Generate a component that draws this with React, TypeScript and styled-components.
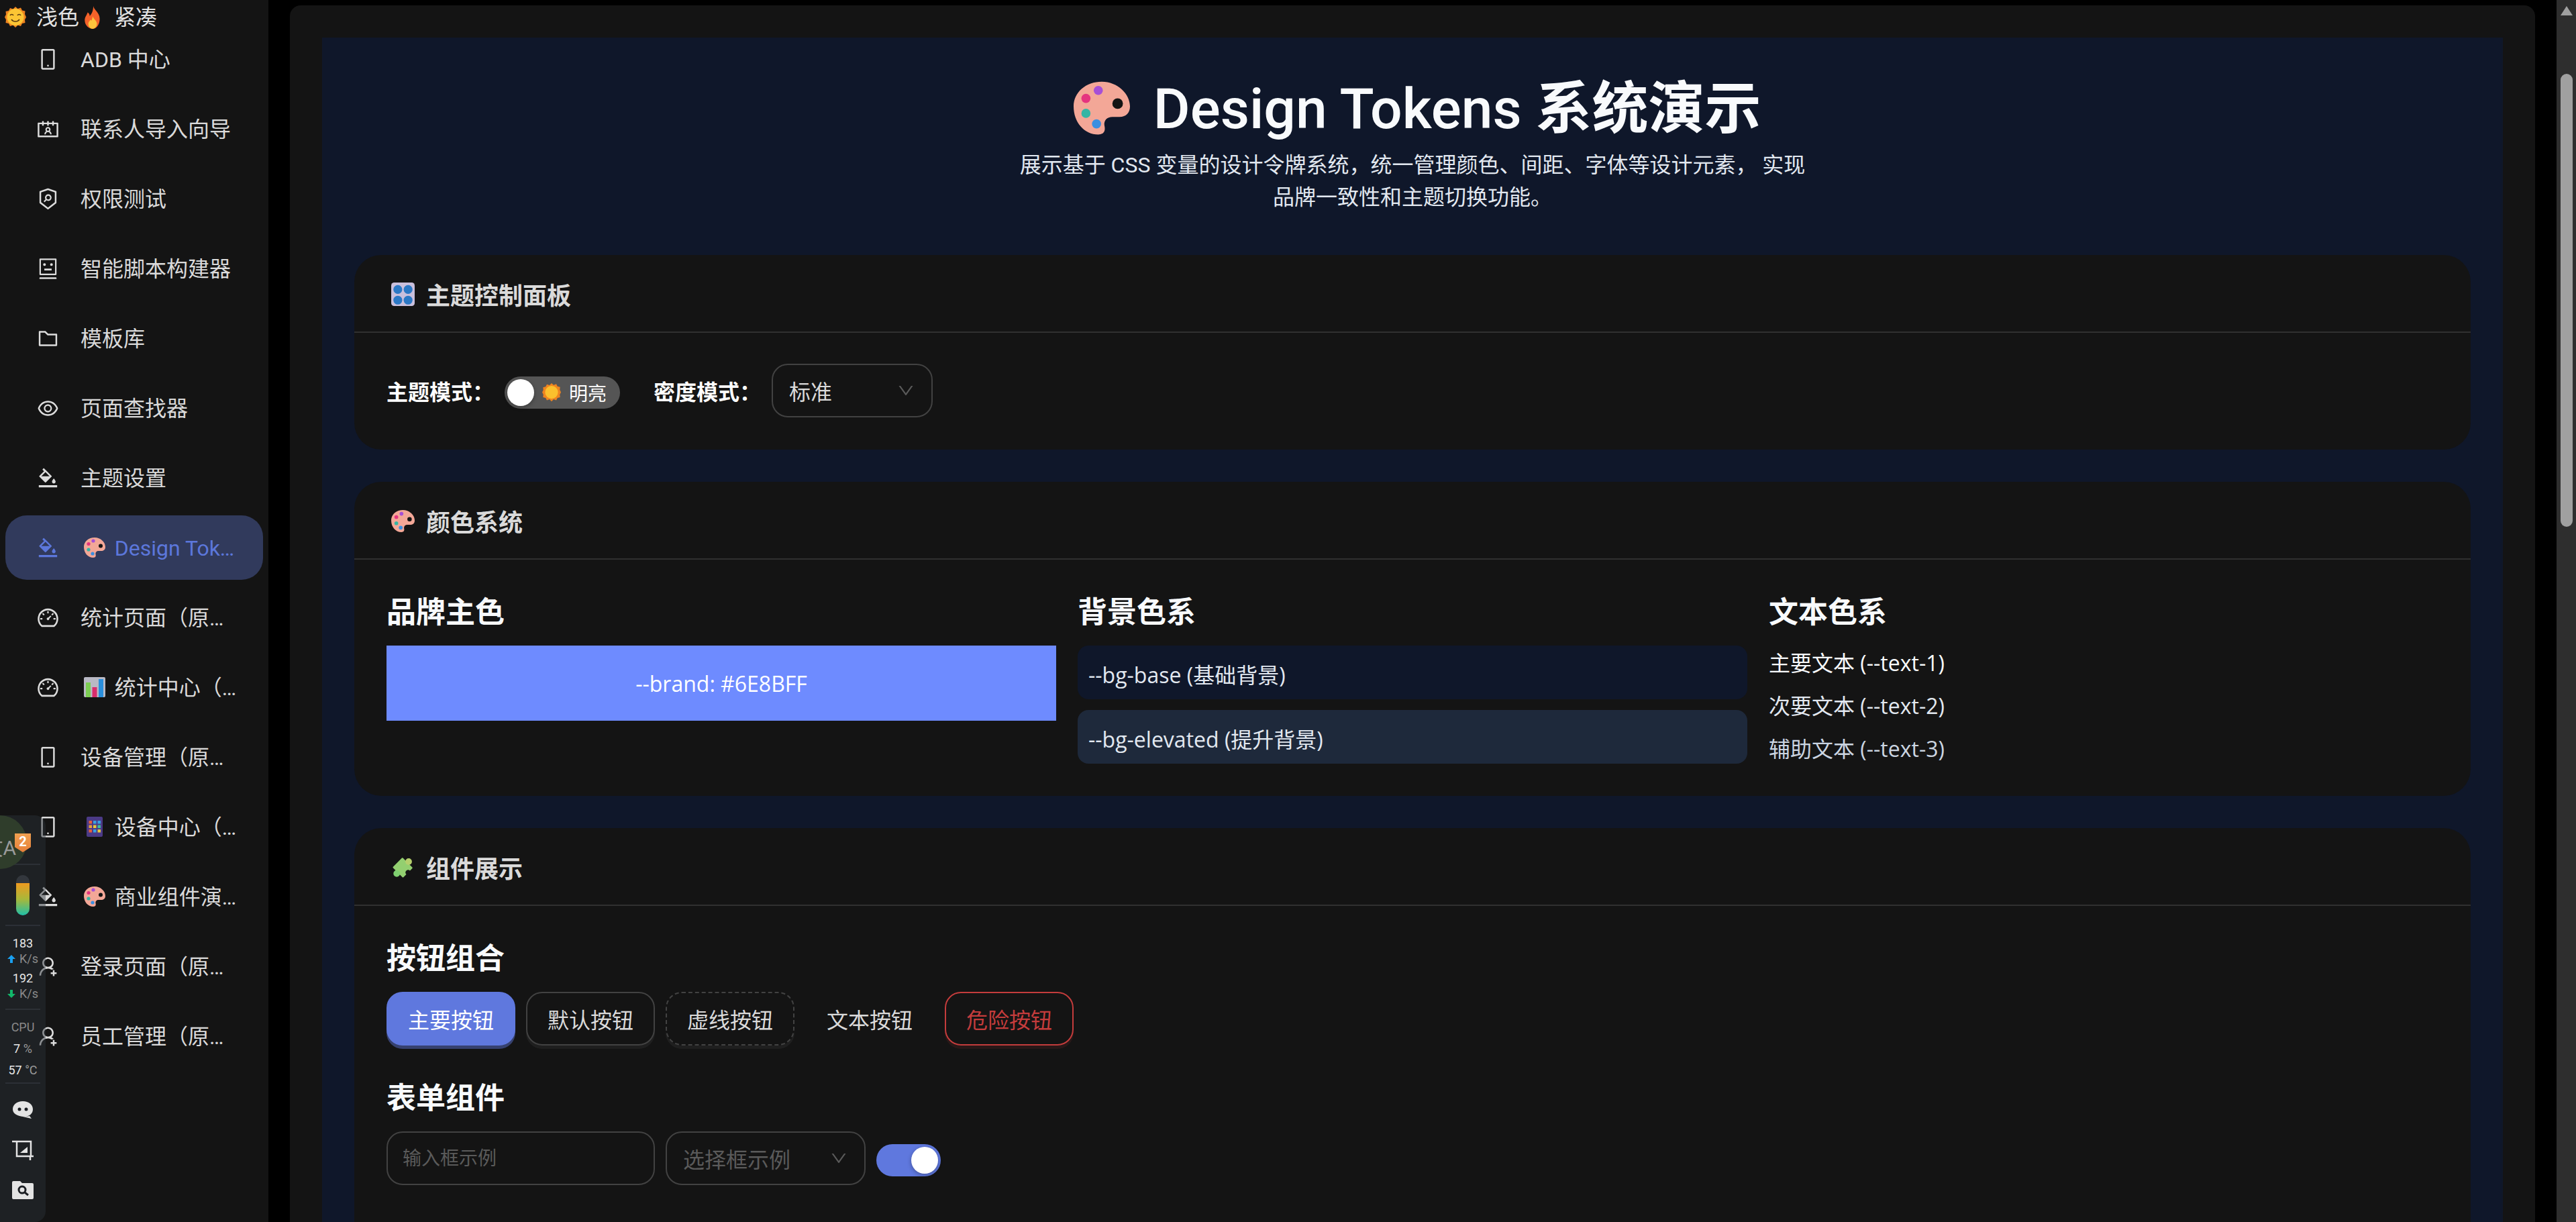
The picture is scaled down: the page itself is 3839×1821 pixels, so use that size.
import { FC, ReactNode } from 'react';
import styled, { createGlobalStyle } from 'styled-components';
import {
  AiOutlineBgColors,
  AiOutlineContacts,
  AiOutlineDashboard,
  AiOutlineDown,
  AiOutlineEye,
  AiOutlineFolder,
  AiOutlineMobile,
  AiOutlineRobot,
  AiOutlineSecurityScan,
  AiOutlineUserAdd,
} from 'react-icons/ai';

const FONT = `Roboto, "Noto Sans CJK SC", sans-serif`;
const TOKEN_FONT = `"Open Sans", "Noto Sans CJK SC", sans-serif`;

const GlobalStyle = createGlobalStyle`
  html, body {
    margin: 0;
    height: 100%;
    background: #000;
    overflow: hidden;
  }
  * {
    box-sizing: border-box;
    font-variant-ligatures: none;
  }
`;

type EmojiName = 'smile' | 'sun' | 'fire' | 'palette' | 'chart' | 'abacus' | 'knobs' | 'puzzle';

const SUN_RAYS =
  'M16 0l3.500 3 4.500-1.500 2 4 4.500 1-.5 4.500L32 15.500l-2 4 .5 4.500-4.500 1-2 4-4.500-1.500L16 31l-3.500-3.500L8 29l-2-4-4.500-1 .5-4.500-2-4 2-4L1.500 7 6 6l2-4 4.500 1.500z';

const Emoji: FC<{ name: EmojiName; size: number; inline?: boolean }> = ({ name, size, inline }) => {
  const art: Record<EmojiName, ReactNode> = {
    smile: (
      <>
        <path d={SUN_RAYS} fill="#ee8420" />
        <circle cx="16" cy="15.500" r="12.500" fill="#fbc534" />
        <path d="M8 13c1-2 4-2 5 0M19 13c1-2 4-2 5 0M10 19c3 4 9 4 12 0" fill="none" stroke="#5a3a10" strokeWidth="1.600" />
      </>
    ),
    sun: (
      <>
        <path d={SUN_RAYS} fill="#ee8420" />
        <circle cx="16" cy="15.500" r="11" fill="#fbc02d" />
      </>
    ),
    fire: (
      <>
        <path d="M17 0c1 6 9 9 9 18 0 8-5 14-10 14S5 27 5 20c0-5 3-7 4-11 2 1 3 3 3 5 3-3 5-8 5-14z" fill="#f4622a" />
        <path d="M16 14c1 4 6 6 6 11 0 4-3 7-6 7s-6-3-6-7c0-3 2-4 3-6 1 1 1 1 1 2 1-2 2-4 2-7z" fill="#fdc43c" />
      </>
    ),
    palette: (
      <>
        <path
          d="M16 1C7 1 0 7 0 15c0 9 6 16 14 16 4 0 4-3 3.500-5-.5-3 1.500-5 4.500-5h4c4 0 6-2.500 6-6 0-7-7-14-16-14z"
          fill="#f3a797"
        />
        <circle cx="25" cy="13.500" r="3" fill="#141414" />
        <circle cx="14" cy="6" r="2.600" fill="#a64fd6" />
        <circle cx="7" cy="10.500" r="2.600" fill="#e5347f" />
        <circle cx="7" cy="19" r="2.600" fill="#35b5a4" />
        <circle cx="13" cy="25" r="2.600" fill="#3a8fe0" />
      </>
    ),
    chart: (
      <>
        <rect x="0" y="1" width="32" height="30" rx="2" fill="#b9b9c4" />
        <rect x="3" y="9" width="7" height="22" fill="#7ccd52" />
        <rect x="12.500" y="16" width="7" height="15" fill="#d92c6c" />
        <rect x="22" y="4" width="7" height="27" fill="#2a8fdc" />
      </>
    ),
    abacus: (
      <>
        <rect x="4" y="1" width="24" height="30" rx="2" fill="#4b3a86" />
        {[7, 13.500, 20].map((y, r) =>
          [7.500, 14, 20.500].map((x, c) => (
            <rect
              key={`${r}-${c}`}
              x={x}
              y={y}
              width="4.500"
              height="4.500"
              fill={[['#e5603c', '#3aa0e0', '#3aa0e0'], ['#e5a03c', '#e5c83c', '#3ac0a0'], ['#e5603c', '#3aa0e0', '#e5c83c']][r][c]}
            />
          )),
        )}
      </>
    ),
    knobs: (
      <>
        <rect x="0" y="0" width="32" height="32" rx="4" fill="#c9bfdc" />
        {[9, 23].map((x) =>
          [9.500, 24].map((y) => <circle key={`${x}-${y}`} cx={x} cy={y} r="6" fill="#2b78c5" />),
        )}
      </>
    ),
    puzzle: (
      <g transform="rotate(45 16 16)">
        <rect x="6" y="7" width="20" height="19" rx="1" fill="#93cf70" />
        <circle cx="16" cy="5" r="4.500" fill="#b5cf6c" />
        <circle cx="16" cy="28" r="4.500" fill="#7fd070" />
        <circle cx="26" cy="16" r="3.500" fill="#141414" />
      </g>
    ),
  };
  return (
    <EmojiSvg viewBox="0 0 32 32" width={size} height={size} $inline={inline}>
      {art[name]}
    </EmojiSvg>
  );
};

const NAV: { icon: ReactNode; emoji?: EmojiName; label: string; active?: boolean }[] = [
  { icon: <AiOutlineMobile />, label: 'ADB 中心' },
  { icon: <AiOutlineContacts />, label: '联系人导入向导' },
  { icon: <AiOutlineSecurityScan />, label: '权限测试' },
  { icon: <AiOutlineRobot />, label: '智能脚本构建器' },
  { icon: <AiOutlineFolder />, label: '模板库' },
  { icon: <AiOutlineEye />, label: '页面查找器' },
  { icon: <AiOutlineBgColors />, label: '主题设置' },
  { icon: <AiOutlineBgColors />, emoji: 'palette', label: 'Design Tokens', active: true },
  { icon: <AiOutlineDashboard />, label: '统计页面（原版）' },
  { icon: <AiOutlineDashboard />, emoji: 'chart', label: '统计中心（新版）' },
  { icon: <AiOutlineMobile />, label: '设备管理（原版）' },
  { icon: <AiOutlineMobile />, emoji: 'abacus', label: '设备中心（新版）' },
  { icon: <AiOutlineBgColors />, emoji: 'palette', label: '商业组件演示页面' },
  { icon: <AiOutlineUserAdd />, label: '登录页面（原版）' },
  { icon: <AiOutlineUserAdd />, label: '员工管理（原版）' },
];

const SysWidget = () => (
  <Widget>
    <WidgetSection $height={74}>
      <TranslateBubble>文A</TranslateBubble>
      <ShieldBadge>2</ShieldBadge>
    </WidgetSection>
    <WidgetSection $height={91}>
      <Gauge>
        <GaugeFill />
      </Gauge>
    </WidgetSection>
    <WidgetSection $height={125}>
      <Metric>183</Metric>
      <Rate>
        <Arrow viewBox="0 0 12 12">
          <path d="M6 0l6 6H8v6H4V6H0z" fill="#1aa0f0" />
        </Arrow>
        K/s
      </Rate>
      <Metric>192</Metric>
      <Rate>
        <Arrow viewBox="0 0 12 12">
          <path d="M6 12L0 6h4V0h4v6h4z" fill="#12b76a" />
        </Arrow>
        K/s
      </Rate>
    </WidgetSection>
    <WidgetSection $height={110}>
      <CpuLabel>CPU</CpuLabel>
      <Metric>
        7 <Unit>%</Unit>
      </Metric>
      <Metric>
        57 <Unit>°C</Unit>
      </Metric>
    </WidgetSection>
    <WidgetTools>
      <svg viewBox="0 0 32 26" width="32" height="26">
        <path d="M16 0c9 0 15 5 15 12s-6 11-13 11c-1 0-2 0-3-.2L29 26l-3-4C12 25 1 20 1 12 1 5 7 0 16 0z" fill="#e4e4e4" />
        <circle cx="11" cy="12" r="2.500" fill="#1c1f24" />
        <circle cx="21" cy="12" r="2.500" fill="#1c1f24" />
      </svg>
      <svg viewBox="0 0 32 32" width="34" height="32" fill="none" stroke="#e4e4e4" strokeWidth="2.500">
        <path d="M0 4h7v22h25M7 4h21v22M27 26v6" />
        <path d="M12 21l11-9v9z" fill="#e4e4e4" stroke="none" />
      </svg>
      <svg viewBox="0 0 32 28" width="32" height="28">
        <path d="M0 3a2 2 0 012-2h10l3 3h15a2 2 0 012 2v20a2 2 0 01-2 2H2a2 2 0 01-2-2z" fill="#e4e4e4" />
        <circle cx="15" cy="14" r="5" fill="none" stroke="#1c1f24" strokeWidth="3" />
        <path d="M19 18l5 4" stroke="#1c1f24" strokeWidth="3" />
      </svg>
    </WidgetTools>
  </Widget>
);

export default function App() {
  return (
    <Shell>
      <GlobalStyle />
      <Sidebar>
        <StatusRow>
          <Emoji name="smile" size={32} />
          <StatusText $tight>浅色</StatusText>
          <Emoji name="fire" size={34} />
          <StatusText>紧凑</StatusText>
        </StatusRow>
        {NAV.map((item) => (
          <NavItem key={item.label} $active={item.active}>
            <NavIcon>{item.icon}</NavIcon>
            <NavLabel>
              {item.emoji && <Emoji name={item.emoji} size={32} inline />}
              {item.emoji && ' '}
              {item.label}
            </NavLabel>
          </NavItem>
        ))}
      </Sidebar>
      <Main>
        <Panel>
          <BluePage>
            <Header>
              <PageTitle>
                <Emoji name="palette" size={84} inline /> <TitleLatin>Design Tokens</TitleLatin> 系统演示
              </PageTitle>
              <Subtitle>
                展示基于 CSS 变量的设计令牌系统，统一管理颜色、间距、字体等设计元素， 实现品牌一致性和主题切换功能。
              </Subtitle>
            </Header>

            <Card>
              <CardHead>
                <Emoji name="knobs" size={35} /> 主题控制面板
              </CardHead>
              <ControlRow>
                <ControlLabel>主题模式：</ControlLabel>
                <ThemeSwitch>
                  <ThemeKnob />
                  <Emoji name="sun" size={28} />
                  明亮
                </ThemeSwitch>
                <ControlLabel $first>密度模式：</ControlLabel>
                <SelectBox $width={240}>
                  标准
                  <AiOutlineDown />
                </SelectBox>
              </ControlRow>
            </Card>

            <Card>
              <CardHead>
                <Emoji name="palette" size={35} /> 颜色系统
              </CardHead>
              <ColorGrid>
                <div>
                  <SubHeading>品牌主色</SubHeading>
                  <BrandSwatch>--brand: #6E8BFF</BrandSwatch>
                </div>
                <div>
                  <SubHeading>背景色系</SubHeading>
                  <SwatchStack>
                    <BgSwatch $bg="#0f172a">--bg-base (基础背景)</BgSwatch>
                    <BgSwatch $bg="#1e293b">--bg-elevated (提升背景)</BgSwatch>
                  </SwatchStack>
                </div>
                <div>
                  <SubHeading>文本色系</SubHeading>
                  <TextStack>
                    <TextSample $color="#f8fafc">主要文本 (--text-1)</TextSample>
                    <TextSample $color="#e2e8f0">次要文本 (--text-2)</TextSample>
                    <TextSample $color="#cbd5e1">辅助文本 (--text-3)</TextSample>
                  </TextStack>
                </div>
              </ColorGrid>
            </Card>

            <Card>
              <CardHead>
                <Emoji name="puzzle" size={35} /> 组件展示
              </CardHead>
              <ShowcaseBody>
                <SubHeading>按钮组合</SubHeading>
                <Row>
                  <Button $kind="primary">主要按钮</Button>
                  <Button $kind="default">默认按钮</Button>
                  <Button $kind="dashed">虚线按钮</Button>
                  <Button $kind="text">文本按钮</Button>
                  <Button $kind="danger">危险按钮</Button>
                </Row>
                <FormHeading>表单组件</FormHeading>
                <Row>
                  <InputBox placeholder="输入框示例" />
                  <SelectBox $width={298} $muted>
                    选择框示例
                    <AiOutlineDown />
                  </SelectBox>
                  <OnSwitch>
                    <OnKnob />
                  </OnSwitch>
                </Row>
              </ShowcaseBody>
            </Card>
          </BluePage>
        </Panel>
      </Main>
      <Scrollbar>
        <ScrollArrow />
        <ScrollThumb />
      </Scrollbar>
      <SysWidget />
    </Shell>
  );
}

const EmojiSvg = styled.svg<{ $inline?: boolean }>`
  display: inline-block;
  vertical-align: -0.14em;
  flex-shrink: 0;
  margin: ${(p) => (p.$inline ? '0 0.17em' : '0')};
`;

const Shell = styled.div`
  position: relative;
  display: flex;
  height: 1821px;
  overflow: hidden;
  background: #000;
  font-family: ${FONT};
  color: #fff;
`;

const Sidebar = styled.aside`
  position: relative;
  flex: 0 0 400px;
  display: flex;
  flex-direction: column;
  gap: 8px;
  padding: 40px 8px 0;
  background: #141414;
`;

const StatusRow = styled.div`
  position: absolute;
  top: 8px;
  left: 7px;
  display: flex;
  align-items: center;
  gap: 15px;
  height: 36px;
`;

const StatusText = styled.span<{ $tight?: boolean }>`
  font-size: 32px;
  line-height: 36px;
  margin-right: ${(p) => (p.$tight ? '-12px' : '0')};
  color: rgba(255, 255, 255, 0.9);
`;

const NavItem = styled.div<{ $active?: boolean }>`
  flex: 0 0 96px;
  display: flex;
  align-items: center;
  gap: 31px;
  padding-left: 46px;
  border-radius: 32px;
  font-size: 32px;
  color: ${(p) => (p.$active ? '#5c77db' : 'rgba(255, 255, 255, 0.85)')};
  background: ${(p) => (p.$active ? '#313a5c' : 'transparent')};
`;

const NavIcon = styled.span`
  display: flex;
  font-size: 35px;
`;

const NavLabel = styled.span`
  width: 240px;
  padding-top: 2px;
  overflow: hidden;
  white-space: nowrap;
  text-overflow: ellipsis;
  line-height: 48px;
`;

const Main = styled.main`
  flex: 1;
  min-width: 0;
  padding: 8px 32px 0;
`;

const Panel = styled.div`
  height: 100%;
  padding: 48px 48px 0;
  background: #141414;
  border-radius: 16px 16px 0 0;
`;

const BluePage = styled.div`
  height: 100%;
  padding: 48px 48px 0;
  background: #0f172a;
`;

const Header = styled.header`
  display: flex;
  flex-direction: column;
  align-items: center;
  margin-bottom: 62px;
  text-align: center;
`;

const PageTitle = styled.h1`
  margin: 0;
  font-size: 84px;
  font-weight: 700;
  line-height: 118px;
  color: #f8fafc;
`;

const TitleLatin = styled.span`
  font-weight: 500;
`;

const Subtitle = styled.p`
  margin: 0;
  max-width: 1200px;
  font-size: 32px;
  line-height: 48px;
  color: #e2e8f0;
`;

const Card = styled.section`
  margin-bottom: 48px;
  background: #141414;
  border-radius: 40px;
`;

const CardHead = styled.div`
  display: flex;
  align-items: center;
  gap: 17px;
  height: 116px;
  padding: 2px 48px 0 55px;
  border-bottom: 2px solid #303030;
  font-size: 36px;
  font-weight: 600;
  color: rgba(255, 255, 255, 0.85);
`;

const ControlRow = styled.div`
  display: flex;
  align-items: center;
  padding: 46px 48px 48px;
`;

const ControlLabel = styled.span<{ $first?: boolean }>`
  margin: ${(p) => (p.$first ? '0 16px 0 50px' : '0 16px 0 0')};
  font-size: 32px;
  font-weight: 600;
  white-space: nowrap;
`;

const ThemeSwitch = styled.div`
  position: relative;
  display: flex;
  align-items: center;
  gap: 12px;
  width: 172px;
  height: 48px;
  margin-top: 6px;
  padding-left: 56px;
  border-radius: 24px;
  background: #555;
  font-size: 28px;
`;

const ThemeKnob = styled.span`
  position: absolute;
  left: 4px;
  top: 4px;
  width: 40px;
  height: 40px;
  border-radius: 50%;
  background: #fff;
  box-shadow: 0 2px 6px rgba(0, 0, 0, 0.3);
`;

const SelectBox = styled.div<{ $width: number; $muted?: boolean }>`
  display: flex;
  align-items: center;
  justify-content: space-between;
  width: ${(p) => p.$width}px;
  height: 80px;
  padding: 0 24px;
  border: 2px solid #424242;
  border-radius: 24px;
  font-size: 32px;
  color: ${(p) => (p.$muted ? '#5a5a5a' : 'rgba(255, 255, 255, 0.85)')};

  > svg {
    font-size: 28px;
    color: #5a5a5a;
  }
`;

const ColorGrid = styled.div`
  display: grid;
  grid-template-columns: repeat(3, 1fr);
  gap: 32px;
  padding: 48px;
`;

const SubHeading = styled.h4`
  margin: 0 0 18px;
  font-size: 44px;
  font-weight: 700;
  line-height: 62px;
  color: #f8fafc;
`;

const FormHeading = styled(SubHeading)`
  margin-top: 48px;
`;

const BrandSwatch = styled.div`
  display: flex;
  align-items: center;
  justify-content: center;
  height: 112px;
  background: #6e8bff;
  font-family: ${TOKEN_FONT};
  font-size: 32px;
  font-weight: 500;
`;

const SwatchStack = styled.div`
  display: flex;
  flex-direction: column;
  gap: 16px;
`;

const BgSwatch = styled.div<{ $bg: string }>`
  display: flex;
  align-items: center;
  height: 80px;
  padding: 4px 16px 0;
  border-radius: 16px;
  background: ${(p) => p.$bg};
  font-family: ${TOKEN_FONT};
  font-size: 32px;
  color: #e2e8f0;
`;

const TextStack = styled.div`
  display: flex;
  flex-direction: column;
  gap: 16px;
  padding-top: 2px;
  margin-bottom: -2px;
`;

const TextSample = styled.div<{ $color: string }>`
  font-family: ${TOKEN_FONT};
  font-size: 32px;
  line-height: 48px;
  color: ${(p) => p.$color};
`;

const ShowcaseBody = styled.div`
  padding: 48px 48px 120px;
`;

const Row = styled.div`
  display: flex;
  align-items: center;
  gap: 16px;
`;

const BUTTON_STYLES = {
  primary: 'background:#5f78de;border:2px solid #5f78de;color:#fff;box-shadow:0 5px 0 rgba(95,120,222,.45);',
  default: 'background:transparent;border:2px solid #424242;color:rgba(255,255,255,.85);box-shadow:0 5px 0 rgba(255,255,255,.05);',
  dashed: 'background:transparent;border:2px dashed #424242;color:rgba(255,255,255,.85);box-shadow:0 5px 0 rgba(255,255,255,.05);',
  text: 'background:transparent;border:2px solid transparent;color:rgba(255,255,255,.85);',
  danger: 'background:transparent;border:2px solid #c43c3c;color:#c43c3c;box-shadow:0 5px 0 rgba(196,60,60,.12);',
};

const Button = styled.button<{ $kind: keyof typeof BUTTON_STYLES }>`
  width: 192px;
  height: 80px;
  padding: 0;
  border-radius: 24px;
  font-family: inherit;
  font-size: 32px;
  ${(p) => BUTTON_STYLES[p.$kind]}
`;

const InputBox = styled.input`
  width: 400px;
  height: 80px;
  padding: 0 22px;
  border: 2px solid #424242;
  border-radius: 24px;
  outline: none;
  background: transparent;
  font-family: inherit;
  font-size: 28px;

  &::placeholder {
    color: #5a5a5a;
  }
`;

const OnSwitch = styled.div`
  position: relative;
  width: 96px;
  height: 48px;
  margin-top: 6px;
  border-radius: 24px;
  background: #5f78de;
`;

const OnKnob = styled.span`
  position: absolute;
  right: 4px;
  top: 4px;
  width: 40px;
  height: 40px;
  border-radius: 50%;
  background: #fff;
  box-shadow: 0 2px 6px rgba(0, 0, 0, 0.3);
`;

const Scrollbar = styled.div`
  position: relative;
  flex: 0 0 29px;
  background: #2e2e2e;
`;

const ScrollArrow = styled.div`
  position: absolute;
  top: 9px;
  left: 6px;
  width: 0;
  height: 0;
  border-left: 9px solid transparent;
  border-right: 9px solid transparent;
  border-bottom: 14px solid #a0a0a0;
`;

const ScrollThumb = styled.div`
  position: absolute;
  top: 110px;
  left: 6px;
  width: 18px;
  height: 675px;
  border-radius: 9px;
  background: #a0a0a0;
`;

const Widget = styled.div`
  position: absolute;
  left: 0;
  top: 1215px;
  bottom: 0;
  width: 68px;
  display: flex;
  flex-direction: column;
  overflow: hidden;
  background: rgba(42, 48, 56, 0.45);
  border-radius: 0 16px 16px 0;
`;

const WidgetSection = styled.div<{ $height: number }>`
  position: relative;
  flex: 0 0 ${(p) => p.$height}px;
  display: flex;
  flex-direction: column;
  align-items: center;
  justify-content: center;
  margin: 0 8px;
  border-bottom: 2px solid #2c3036;
`;

const TranslateBubble = styled.div`
  position: absolute;
  left: -48px;
  top: 0;
  width: 80px;
  height: 80px;
  display: flex;
  align-items: center;
  justify-content: flex-end;
  padding: 12px 16px 0 0;
  border-radius: 50%;
  overflow: hidden;
  background: #2f3d2b;
  font-size: 30px;
  white-space: nowrap;
  color: #9a9a9a;
`;

const ShieldBadge = styled.span`
  position: absolute;
  left: 14px;
  top: 27px;
  width: 24px;
  height: 28px;
  clip-path: polygon(0 0, 100% 0, 100% 72%, 50% 100%, 0 72%);
  background: linear-gradient(#f0a050, #e8803a);
  text-align: center;
  font-size: 20px;
  font-weight: 700;
  line-height: 25px;
`;

const Gauge = styled.div`
  width: 20px;
  height: 60px;
  padding-top: 12px;
  border-radius: 10px;
  overflow: hidden;
  background: #33373d;
`;

const GaugeFill = styled.div`
  height: 100%;
  background: linear-gradient(#ef9a1f, #a8b83a 50%, #1fc0a8);
`;

const Metric = styled.div`
  font-size: 18px;
  line-height: 32px;
  white-space: nowrap;
  color: #e8e8e8;
`;

const Unit = styled.span`
  color: #9a9a9a;
`;

const Rate = styled.div`
  display: flex;
  align-items: center;
  gap: 6px;
  margin: -3px 0 3px;
  font-size: 18px;
  line-height: 20px;
  white-space: nowrap;
  color: #8a8a8a;
`;

const Arrow = styled.svg`
  width: 12px;
  height: 12px;
`;

const CpuLabel = styled.div`
  margin-top: 8px;
  font-size: 18px;
  line-height: 32px;
  color: #8a8a8a;
`;

const WidgetTools = styled.div`
  display: flex;
  flex-direction: column;
  align-items: center;
  gap: 30px;
  padding-top: 26px;
`;
